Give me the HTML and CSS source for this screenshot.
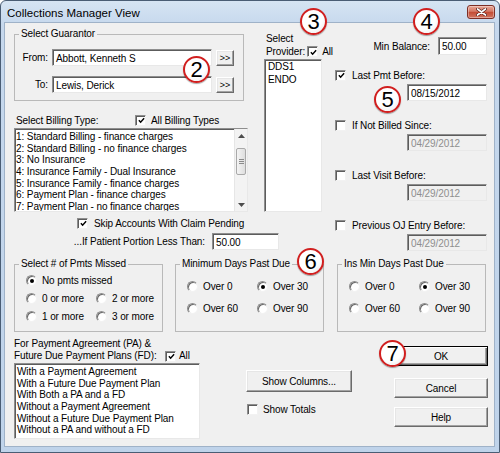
FILE: index.html
```html
<!DOCTYPE html>
<html>
<head>
<meta charset="utf-8">
<title>Collections Manager View</title>
<link rel="stylesheet" href="styles.css">
</head>
<body>
<div class="window">
  <div class="titlebar">
    <span class="title">Collections Manager View</span>
    <span class="close"><svg width="11" height="8" viewBox="0 0 11 8"><path d="M1.5 1 L9.5 7 M9.5 1 L1.5 7" stroke="#4a1510" stroke-width="3" stroke-linecap="round"/><path d="M1.5 1 L9.5 7 M9.5 1 L1.5 7" stroke="#fff" stroke-width="1.7" stroke-linecap="round"/></svg></span>
  </div>
  <div class="client">
    <div class="top">
      <div class="col-left">
        <fieldset class="group guarantor">
          <legend>Select Guarantor</legend>
          <div class="g-row"><span class="g-label">From:</span><span class="input g-input">Abbott, Kenneth S</span><span class="btn mini">&gt;&gt;</span></div>
          <div class="g-row"><span class="g-label">To:</span><span class="input g-input">Lewis, Derick</span><span class="btn mini">&gt;&gt;</span></div>
        </fieldset>
        <div class="billing-head">
          <span class="bh-label">Select Billing Type:</span>
          <span class="chk"><svg viewBox="0 0 8 8"><path d="M1 3.8 L3 6 L7 1.5" fill="none" stroke="#000" stroke-width="1.7"/></svg></span>
          <span class="after-chk">All Billing Types</span>
        </div>
        <div class="listbox billing">
          <div class="items">
            <div>1: Standard Billing - finance charges</div>
            <div>2: Standard Billing - no finance charges</div>
            <div>3: No Insurance</div>
            <div>4: Insurance Family - Dual Insurance</div>
            <div>5: Insurance Family - finance charges</div>
            <div>6: Payment Plan - finance charges</div>
            <div>7: Payment Plan - no finance charges</div>
          </div>
          <div class="scrollbar">
            <div class="sb-btn"><svg width="7" height="4" viewBox="0 0 7 4"><path d="M0 4 L3.5 0 L7 4 Z" fill="#4d4d4d"/></svg></div>
            <div class="sb-track"><div class="sb-thumb"><span></span><span></span><span></span></div></div>
            <div class="sb-btn"><svg width="7" height="4" viewBox="0 0 7 4"><path d="M0 0 L3.5 4 L7 0 Z" fill="#4d4d4d"/></svg></div>
          </div>
        </div>
        <div class="skip-row">
          <span class="chk"><svg viewBox="0 0 8 8"><path d="M1 3.8 L3 6 L7 1.5" fill="none" stroke="#000" stroke-width="1.7"/></svg></span>
          <span class="after-chk">Skip Accounts With Claim Pending</span>
        </div>
        <div class="portion-row">
          <span class="portion-label">...If Patient Portion Less Than:</span>
          <span class="input portion">50.00</span>
        </div>
      </div>

      <div class="col-mid">
        <div class="prov-line">Select</div>
        <div class="prov-line prov-row">
          <span>Provider:</span>
          <span class="chk"><svg viewBox="0 0 8 8"><path d="M1 3.8 L3 6 L7 1.5" fill="none" stroke="#000" stroke-width="1.7"/></svg></span>
          <span class="all">All</span>
        </div>
        <div class="listbox provider">
          <div>DDS1</div>
          <div>ENDO</div>
        </div>
      </div>

      <div class="col-right">
        <div class="min-row">
          <span>Min Balance:</span>
          <span class="input min-input">50.00</span>
        </div>
        <div class="opt first">
          <div class="opt-check">
            <span class="chk"><svg viewBox="0 0 8 8"><path d="M1 3.8 L3 6 L7 1.5" fill="none" stroke="#000" stroke-width="1.7"/></svg></span>
            <span class="opt-txt">Last Pmt Before:</span>
          </div>
          <div class="input opt-input">08/15/2012</div>
        </div>
        <div class="opt">
          <div class="opt-check"><span class="chk"></span><span class="opt-txt">If Not Billed Since:</span></div>
          <div class="input opt-input dis">04/29/2012</div>
        </div>
        <div class="opt">
          <div class="opt-check"><span class="chk"></span><span class="opt-txt">Last Visit Before:</span></div>
          <div class="input opt-input dis">04/29/2012</div>
        </div>
        <div class="opt">
          <div class="opt-check"><span class="chk"></span><span class="opt-txt">Previous OJ Entry Before:</span></div>
          <div class="input opt-input dis">04/29/2012</div>
        </div>
      </div>
    </div>

    <div class="groups">
      <fieldset class="group rgroup g1">
        <legend>Select # of Pmts Missed</legend>
        <div class="rg-grid">
          <div class="ropt full"><span class="radio on"></span><span>No pmts missed</span></div>
          <div class="ropt"><span class="radio"></span><span>0 or more</span></div>
          <div class="ropt"><span class="radio"></span><span>2 or more</span></div>
          <div class="ropt"><span class="radio"></span><span>1 or more</span></div>
          <div class="ropt"><span class="radio"></span><span>3 or more</span></div>
        </div>
      </fieldset>
      <fieldset class="group rgroup g2">
        <legend>Minimum Days Past Due</legend>
        <div class="rg-grid">
          <div class="ropt"><span class="radio"></span><span>Over 0</span></div>
          <div class="ropt"><span class="radio on"></span><span>Over 30</span></div>
          <div class="ropt"><span class="radio"></span><span>Over 60</span></div>
          <div class="ropt"><span class="radio"></span><span>Over 90</span></div>
        </div>
      </fieldset>
      <fieldset class="group rgroup g3">
        <legend>Ins Min Days Past Due</legend>
        <div class="rg-grid">
          <div class="ropt"><span class="radio"></span><span>Over 0</span></div>
          <div class="ropt"><span class="radio on"></span><span>Over 30</span></div>
          <div class="ropt"><span class="radio"></span><span>Over 60</span></div>
          <div class="ropt"><span class="radio"></span><span>Over 90</span></div>
        </div>
      </fieldset>
    </div>

    <div class="bottom">
      <div class="pa">
        <div class="pa-line">For Payment Agreement (PA) &amp;</div>
        <div class="pa-line pa-line2">
          <span class="pa-lbl">Future Due Payment Plans (FD):</span>
          <span class="chk"><svg viewBox="0 0 8 8"><path d="M1 3.8 L3 6 L7 1.5" fill="none" stroke="#000" stroke-width="1.7"/></svg></span>
          <span class="all">All</span>
        </div>
        <div class="listbox pa-list">
          <div>With a Payment Agreement</div>
          <div>With a Future Due Payment Plan</div>
          <div>With Both a PA and a FD</div>
          <div>Without a Payment Agreement</div>
          <div>Without a Future Due Payment Plan</div>
          <div>Without a PA and without a FD</div>
        </div>
      </div>
      <div class="mid-actions">
        <div class="btn showcols">Show Columns...</div>
        <div class="totals"><span class="chk"></span><span class="after-totals">Show Totals</span></div>
      </div>
      <div class="actions">
        <div class="btn default ok">OK</div>
        <div class="btn cancel">Cancel</div>
        <div class="btn help">Help</div>
      </div>
    </div>
  </div>

  <span class="badge b2">2</span>
  <span class="badge b3">3</span>
  <span class="badge b4">4</span>
  <span class="badge b5">5</span>
  <span class="badge b6">6</span>
  <span class="badge b7">7</span>
</div>
</body>
</html>
```

FILE: styles.css
```css
* { box-sizing: border-box; }
html, body { margin: 0; padding: 0; }
body {
  width: 500px; height: 453px; overflow: hidden; background: #fff;
  font-family: "Liberation Sans", Arial, sans-serif;
  font-size: 10px; letter-spacing: -0.1px; color: #000;
}
.window {
  position: relative; width: 500px; height: 453px;
  border: 1px solid #4a5d74; border-radius: 6px 6px 0 0;
  background: linear-gradient(#d6e4f3, #c6d8ed 24px, #bfd3ea);
  padding: 0 5px 6px 4px;
  display: flex; flex-direction: column;
}
.titlebar { height: 22px; display: flex; justify-content: space-between; padding-left: 2px; flex: none; }
.title { font-size: 11.5px; letter-spacing: 0; line-height: 22px; margin-top: 1px; }
.close {
  width: 28px; height: 14px; margin-top: 4px; margin-right: -1px;
  border: 1px solid #7d2e25; border-radius: 3px;
  background: linear-gradient(#e9a898, #d57763 45%, #c34a33 50%, #d27560);
  box-shadow: inset 0 0 0 1px rgba(255,255,255,.35);
  display: flex; align-items: center; justify-content: center;
}
.client {
  flex: 1; background: #f0f0f0; box-shadow: 0 0 0 1px #9fb2c8;
  padding: 5px 0 0 9px;
}

/* common controls */
.group { margin: 0; padding: 0; border: 1px solid #b9b9b9; min-width: 0; }
.group legend { padding: 0 2px; margin-left: 4px; line-height: 12px; }
.input {
  display: flex; align-items: center; height: 17px; background: #fff;
  border: 1px solid; border-color: #8e8e8e #e8e8e8 #e8e8e8 #8e8e8e;
  box-shadow: inset 1px 1px 0 #5c5c5c;
  padding: 1px 0 0 3px; white-space: nowrap; flex: none;
}
.input.dis { background: #f0f0f0; color: #8e8e8e; }
.btn {
  display: flex; align-items: center; justify-content: center; background: #f0f0f0;
  border: 1px solid; border-color: #fff #6b6b6b #6b6b6b #fff;
  box-shadow: inset -1px -1px 0 #a3a3a3, inset 1px 1px 0 #e6e6e6;
  flex: none; white-space: nowrap;
}
.btn.default {
  border-color: #000;
  box-shadow: inset 1px 1px 0 #fff, inset -1px -1px 0 #6b6b6b, inset -2px -2px 0 #a3a3a3;
}
.chk {
  width: 11px; height: 11px; flex: none; background: #fff;
  border: 1px solid; border-color: #8e8e8e #f2f2f2 #f2f2f2 #8e8e8e;
  box-shadow: inset 1px 1px 0 #5c5c5c;
  display: inline-flex; align-items: center; justify-content: center;
}
.chk svg { width: 7px; height: 7px; margin: 1px 0 0 1px; }
.radio {
  position: relative; width: 11px; height: 11px; flex: none; border-radius: 50%;
  background: #fff; border: 1px solid; border-color: #8e8e8e #f2f2f2 #f2f2f2 #8e8e8e;
  box-shadow: inset 1px 1px 0 #6a6a6a;
}
.radio.on::after {
  content: ""; position: absolute; left: 3px; top: 3px; width: 4px; height: 4px;
  border-radius: 50%; background: #000;
}
.listbox {
  background: #fff;
  border: 1px solid; border-color: #8e8e8e #e8e8e8 #e8e8e8 #8e8e8e;
  box-shadow: inset 1px 1px 0 #5c5c5c;
  overflow: hidden; white-space: nowrap;
}

/* top section */
.top { display: flex; align-items: flex-start; }
.col-left { width: 250px; flex: none; }
.guarantor { width: 230px; padding: 9px 0 7px 0; }
.g-row { display: flex; align-items: center; height: 17px; }
.g-row + .g-row { margin-top: 10px; }
.g-label { width: 37px; text-align: right; padding-right: 4px; flex: none; }
.g-input { width: 160px; }
.mini { width: 18px; height: 16px; margin-left: 4px; font-size: 9px; letter-spacing: 0; }

.billing-head { display: flex; align-items: center; height: 12px; margin-top: 13px; padding-left: 2px; }
.bh-label { width: 119px; flex: none; }
.after-chk { margin-left: 5px; white-space: nowrap; }

.billing { display: flex; width: 234px; height: 84px; margin-top: 2px; }
.billing .items { flex: 1; padding: 2px 0 0 1px; line-height: 11.67px; overflow: hidden; }
.scrollbar { width: 13px; flex: none; display: flex; flex-direction: column; background: #f3f3f3; border-left: 1px solid #e6e6e6; }
.sb-btn { height: 13px; display: flex; align-items: center; justify-content: center; flex: none; }
.sb-track { flex: 1; padding-top: 6px; }
.sb-thumb {
  height: 27px; margin: 0 1px; border: 1px solid #a9a9a9; border-radius: 2px;
  background: linear-gradient(to right, #f4f4f4, #dedede);
  display: flex; flex-direction: column; align-items: center; justify-content: center; gap: 1px;
}
.sb-thumb span { width: 5px; height: 1px; background: #8a8a8a; }

.skip-row { display: flex; align-items: center; height: 12px; margin-top: 5px; padding-left: 63px; }
.skip-row .after-chk { margin-left: 6px; }
.portion-row { display: flex; align-items: center; height: 17px; margin-top: 4px; }
.portion-label { width: 191px; text-align: right; white-space: nowrap; flex: none; }
.portion { width: 67px; margin-left: 7px; }

.col-mid { width: 58px; flex: none; }
.prov-line { line-height: 13px; height: 13px; padding-left: 2px; white-space: nowrap; }
.prov-line:first-child { margin-top: 4px; }
.prov-row { display: flex; align-items: center; }
.prov-row .chk { margin-left: 2px; }
.all { margin-left: 4px; }
.provider { width: 58px; height: 153px; margin-top: 1px; padding: 0 0 0 3px; line-height: 13px; }

.col-right { width: 152px; margin-left: 13px; flex: none; }
.min-row { display: flex; align-items: center; justify-content: flex-end; height: 18px; margin-top: 9px; }
.min-input { width: 49px; height: 18px; margin-left: 8px; }
.opt { margin-top: 18px; }
.opt.first { margin-top: 14px; }
.opt-check { display: flex; align-items: center; height: 12px; }
.opt-txt { margin-left: 6px; white-space: nowrap; }
.opt-input { width: 80px; margin: 3px 0 0 72px; }

/* radio groups */
.groups { display: flex; margin-top: 7px; }
.rgroup { width: 149px; height: 74px; flex: none; }
.g2 { margin-left: 12px; }
.g3 { margin-left: 13px; }
.rg-grid { display: grid; grid-template-columns: 70px 72px; padding-left: 11px; }
.g1 .rg-grid { row-gap: 6px; padding-top: 4px; }
.g2 .rg-grid, .g3 .rg-grid { row-gap: 10px; padding-top: 10px; }
.ropt { display: flex; align-items: center; height: 12px; white-space: nowrap; }
.ropt .radio + span { margin-left: 5px; }
.full { grid-column: 1 / span 2; }

/* bottom */
.bottom { display: flex; margin-top: 6px; }
.pa { width: 186px; flex: none; }
.pa-line { line-height: 12px; height: 12px; white-space: nowrap; }
.pa-line2 { display: flex; align-items: center; }
.pa-lbl { width: 151px; flex: none; }
.pa-line2 .all { margin-left: 3px; }
.pa-list { height: 76px; margin-top: 1px; padding: 2px 0 0 2px; line-height: 11.67px; }
.mid-actions { margin-left: 46px; width: 106px; flex: none; }
.showcols { height: 22px; margin-top: 32px; }
.totals { display: flex; align-items: center; height: 11px; margin-top: 12px; padding-left: 1px; }
.after-totals { margin-left: 5px; }
.actions { margin-left: 42px; width: 94px; flex: none; }
.actions .btn { height: 20px; }
.ok { margin-top: 8px; }
.cancel { margin-top: 12px; }
.help { margin-top: 9px; }

/* callout badges */
.badge {
  position: absolute; width: 27px; height: 27px; border-radius: 50%;
  border: 2px solid #d11f1f;
  background: radial-gradient(circle at 40% 35%, #fff 55%, #e4e4e4);
  box-shadow: 0 1px 1px rgba(0,0,0,.35);
  display: flex; align-items: center; justify-content: center;
  font-size: 22px; line-height: 1; letter-spacing: 0; color: #000; padding-top: 1px;
}
.b2 { left: 182px; top: 55px; }
.b3 { left: 299px; top: 7px; }
.b4 { left: 412px; top: 7px; }
.b5 { left: 373px; top: 85px; }
.b6 { left: 296px; top: 247px; }
.b7 { left: 378px; top: 339px; }
```
